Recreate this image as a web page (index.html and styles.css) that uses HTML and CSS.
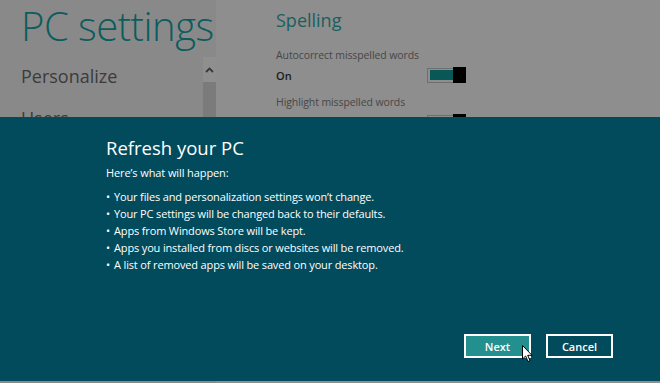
FILE: index.html
```html
<!DOCTYPE html>
<html lang="en">
<head>
 <meta charset="UTF-8">
 <meta name="viewport" content="width=device-width, initial-scale=1.0">
 <title>PC settings</title>
 <link rel="stylesheet" href="styles.css">
</head>
<body>
 <div class="screen">
   <div class="nav">
     <h1 class="nav-title">PC settings</h1>
     <div class="nav-list">
       <div class="nav-item">Personalize</div>
       <div class="nav-item">Users</div>
     </div>
     <div class="scrollbar">
       <div class="scroll-up">
         <svg width="9" height="6" viewBox="0 0 9 6"><path d="M1 5 L4.5 1.5 L8 5" fill="none" stroke="#3a3a3a" stroke-width="1.8"/></svg>
       </div>
       <div class="scroll-thumb"></div>
     </div>
   </div>

   <div class="content">
     <h2 class="section-title">Spelling</h2>
     <div class="setting">
       <div class="setting-label">Autocorrect misspelled words</div>
       <div class="setting-row">
         <span class="setting-value">On</span>
         <span class="toggle"><span class="toggle-fill"></span><span class="toggle-thumb"></span></span>
       </div>
     </div>
     <div class="setting">
       <div class="setting-label">Highlight misspelled words</div>
       <div class="setting-row">
         <span class="setting-value">On</span>
         <span class="toggle"><span class="toggle-fill"></span><span class="toggle-thumb"></span></span>
       </div>
     </div>
   </div>

   <!-- cuadro de dialogo sobre la pagina -->
   <div class="dialog">
     <div class="dialog-body">
       <h3 class="dialog-title">Refresh your PC</h3>
       <p class="dialog-intro">Here’s what will happen:</p>
       <ul class="dialog-list">
         <li>Your files and personalization settings won’t change.</li>
         <li>Your PC settings will be changed back to their defaults.</li>
         <li>Apps from Windows Store will be kept.</li>
         <li>Apps you installed from discs or websites will be removed.</li>
         <li>A list of removed apps will be saved on your desktop.</li>
       </ul>
       <div class="dialog-actions">
         <button class="btn btn-primary">Next</button>
         <button class="btn">Cancel</button>
       </div>
     </div>
   </div>

   <svg class="cursor" width="12" height="18" viewBox="0 0 12 18"><path d="M0.5 0.5 L0.5 14 L3.6 11 L6 16.5 L8 15.6 L5.7 10.3 L10 10.3 Z" fill="#fff" stroke="#000" stroke-width="1"/></svg>
 </div>
</body>
</html>
```

FILE: styles.css
```css
* { box-sizing: border-box; }
body { margin: 0; font-family: "Open Sans", "Noto Sans", sans-serif; }
.screen { position: relative; width: 660px; height: 383px; display: flex; overflow: hidden; background: #8e8e8e; }

.nav { position: relative; width: 216px; background: #898989; padding: 0 0 0 21px; }
.nav-title { margin: 0; padding-top: 1px; width: max-content; font-size: 40px; font-weight: 300; color: #0c5c5e; letter-spacing: -0.5px; line-height: 50px; white-space: nowrap; }
.nav-list { margin-top: 12px; }
.nav-item { font-size: 18px; font-weight: 400; color: #3b3b3b; line-height: 26px; margin-bottom: 16px; }

.scrollbar { position: absolute; left: 203px; top: 57px; width: 13px; height: 70px; background: #8f8f8f; }
.scroll-up { height: 25px; display: flex; align-items: center; justify-content: center; }
.scroll-thumb { height: 45px; background: #7b7b7b; }

.content { flex: 1; padding: 6px 0 0 60px; }
.section-title { margin: 0; font-size: 18px; font-weight: 400; color: #19605f; line-height: 28px; }
.setting { margin-top: 14px; width: 189px; }
.setting + .setting { margin-top: 10px; }
.setting-label { font-size: 10.5px; color: #474747; line-height: 14px; letter-spacing: -0.1px; }
.setting-row { display: flex; justify-content: space-between; align-items: center; margin-top: 3px; height: 20px; }
.setting-value { font-size: 11px; font-weight: 600; color: #1c1c1c; }
.toggle { display: flex; width: 38px; height: 15px; border: 1.5px solid #6e6e6e; background: #8e8e8e; }
.toggle-fill { flex: 1; margin: 1.5px 0 1.5px 1.5px; background: #0a5758; }
.toggle-thumb { width: 13px; margin: -1.5px -1.5px -1.5px 0; background: #000; }

.dialog { position: absolute; left: 0; top: 117px; width: 660px; height: 264px; background: #024b5c; }
.dialog-body { padding: 17px 47px 0 106px; color: #fff; display: flex; flex-direction: column; height: 100%; }
.dialog-title { margin: 0; font-size: 18.5px; font-weight: 400; line-height: 28px; }
.dialog-intro { margin: 3px 0 0; font-size: 11px; line-height: 15px; letter-spacing: -0.1px; }
.dialog-list { margin: 8px 0 0; padding: 0; list-style: none; }
.dialog-list li { font-size: 11px; line-height: 17px; letter-spacing: -0.15px; }
.dialog-list li::before { content: "•"; margin-right: 4px; }
.dialog-actions { display: flex; justify-content: flex-end; gap: 15px; margin-top: auto; margin-bottom: 23px; }
.btn { width: 67px; height: 24px; border: 2px solid #fff; background: transparent; color: #fff; font-family: inherit; font-size: 11px; font-weight: 600; padding: 0; }
.btn-primary { background: #23908f; }

.cursor { position: absolute; left: 522px; top: 345px; }
```
